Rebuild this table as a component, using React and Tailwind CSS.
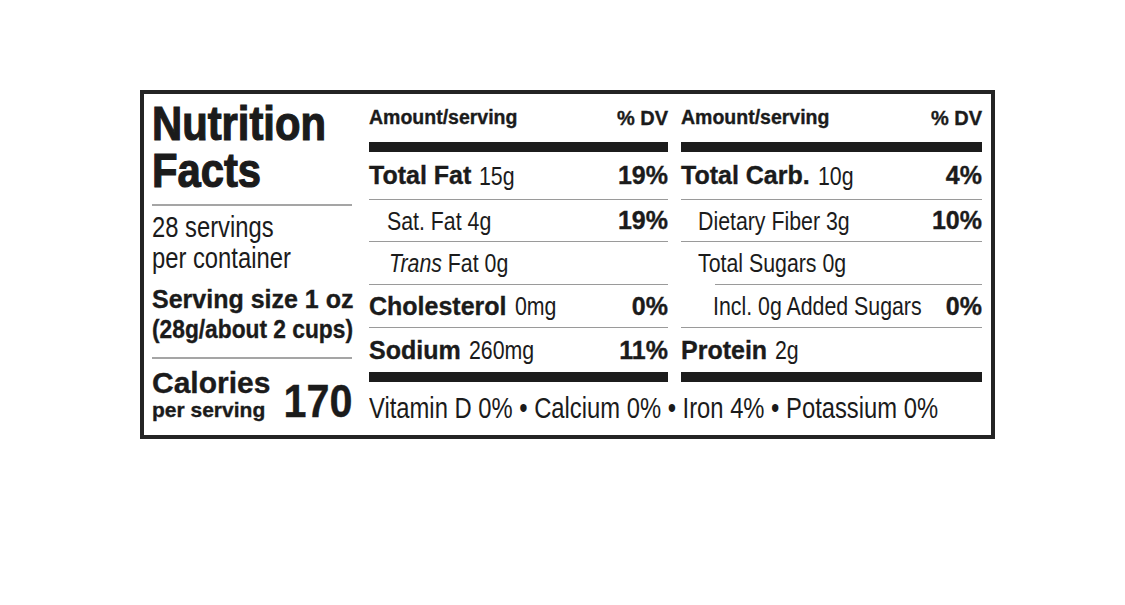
import React from 'react'

const bold = "font-['Liberation_Sans',Arial,sans-serif] font-bold [-webkit-text-stroke:0.35px_#1b1b1b]"
const sans = "font-['Liberation_Sans',Arial,sans-serif]"
// no condensed face installed, so regular copy is squeezed horizontally
const squeeze = 'inline-block origin-left scale-x-[0.82]'

const leftRows = [
  { b: 'Total Fat', v: '15g', dv: '19%', h: 'h-[47px]' },
  { v: 'Sat. Fat 4g', dv: '19%', h: 'h-[41px]', pad: 'pl-[18px]' },
  { i: 'Trans', v: ' Fat 0g', h: 'h-[42px]', pad: 'pl-[20px]' },
  { b: 'Cholesterol', v: '0mg', dv: '0%', h: 'h-[42px]' },
  { b: 'Sodium', v: '260mg', dv: '11%', h: 'h-[44px]', last: true },
]

const rightRows = [
  { b: 'Total Carb.', v: '10g', dv: '4%', h: 'h-[47px]' },
  { v: 'Dietary Fiber 3g', dv: '10%', h: 'h-[41px]', pad: 'pl-[17px]' },
  { v: 'Total Sugars 0g', h: 'h-[42px]', pad: 'pl-[17px]', sep: 'ml-[34px]' },
  { v: 'Incl.\u00a00g Added Sugars', dv: '0%', h: 'h-[42px]', pad: 'pl-[32px]' },
  { b: 'Protein', v: '2g', h: 'h-[44px]', last: true },
]

const Row = ({ r }) => (
  <>
    <div className={`flex items-center justify-between ${r.h} ${r.pad || ''}`}>
      <div className="flex min-w-0 items-center whitespace-nowrap">
        {r.b && <span className={`${bold} mr-[8px] text-[25px] leading-none`}>{r.b}</span>}
        <span className={`${sans} ${squeeze} text-[26px] leading-none whitespace-pre`}>
          {r.i && <i>{r.i}</i>}
          {r.v}
        </span>
      </div>
      {r.dv && <span className={`${bold} shrink-0 text-[25px] leading-none`}>{r.dv}</span>}
    </div>
    {!r.last && <div className={`h-px bg-[#9a9a9a] ${r.sep || ''}`} />}
  </>
)

const Column = ({ rows }) => (
  <div className="flex flex-col">
    <div className="flex h-[48px] items-center justify-between">
      <span className={`${bold} text-[19.5px] leading-none`}>Amount/serving</span>
      <span className={`${bold} text-[20px] leading-none`}>% DV</span>
    </div>
    <div className="h-[10px] bg-[#1c1c1c]" />
    {rows.map((r, i) => (
      <Row key={i} r={r} />
    ))}
    <div className="h-[10px] bg-[#1c1c1c]" />
  </div>
)

export default function App() {
  return (
    <div className="min-h-screen bg-white pl-[140px] pt-[90px] text-[#1b1b1b]">
      <div className="flex h-[349px] w-[855px] border-4 border-[#242424] pl-[8px] pr-[9px]">
        {/* title column */}
        <div className="flex w-[200px] flex-col">
          <h1 className={`${sans} origin-left scale-x-[0.87] whitespace-nowrap pt-[6px] text-[48px] font-bold leading-[47px] [-webkit-text-stroke:1.2px_#1b1b1b]`}>
            Nutrition
            <br />
            Facts
          </h1>
          <div className="mt-[10px] h-[2px] bg-[#a5a5a5]" />
          <p className={`${sans} mt-[6px] origin-left scale-x-[0.82] whitespace-nowrap text-[29px] leading-[31px]`}>
            28 servings
            <br />
            per container
          </p>
          <div className={`${bold} mt-[10px] text-[25px] leading-[30px] whitespace-nowrap`}>
            <div>Serving size 1 oz</div>
            <div className="origin-left scale-x-[0.91]">(28g/about 2 cups)</div>
          </div>
          <div className="mt-[13px] h-[2px] bg-[#a5a5a5]" />
          <div className="mt-[9px] flex items-end justify-between">
            <div className={bold}>
              <div className="text-[30px] leading-[30px]">Calories</div>
              <div className="text-[21px] leading-[24px]">per serving</div>
            </div>
            <div className={`${bold} origin-right scale-x-[0.88] text-[47px] leading-[42px]`}>170</div>
          </div>
        </div>

        {/* nutrient table */}
        <div className="ml-[17px] flex w-[613px] flex-col">
          <div className="grid grid-cols-[299px_301px] gap-x-[13px]">
            <Column rows={leftRows} />
            <Column rows={rightRows} />
          </div>
          <div className="flex min-w-0 flex-1 items-center whitespace-nowrap">
            <span className={`${sans} ${squeeze} text-[29px] leading-none`}>
              Vitamin D 0% • Calcium 0% • Iron 4% • Potassium 0%
            </span>
          </div>
        </div>
      </div>
    </div>
  )
}
